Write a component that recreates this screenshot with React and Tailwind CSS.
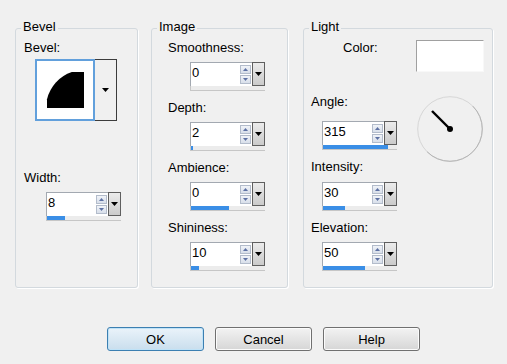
import React from "react";

function SpinBtn({ up }) {
  return (
    <div className="w-[11px] h-[9px] border border-[#b3bccb] bg-gradient-to-b from-[#f0f3f8] to-[#d8dfea] flex items-center justify-center">
      <svg width="5" height="3" viewBox="0 0 5 3">
        {up ? <path d="M0 3 L2.5 0 L5 3 Z" fill="#5d71a3" /> : <path d="M0 0 L5 0 L2.5 3 Z" fill="#5d71a3" />}
      </svg>
    </div>
  );
}

function DownTri() {
  return (
    <svg width="7" height="4" viewBox="0 0 7 4">
      <path d="M0 0 L7 0 L3.5 4 Z" fill="#000" />
    </svg>
  );
}

function Spin({ value, bar, className = "" }) {
  return (
    <div className={`flex flex-col w-[75px] ${className}`}>
      <div className="flex h-[24px]">
        <div className="flex-1 flex bg-white border-t border-l border-[#a3a9b1] pl-[1px]">
          <span className="flex-1 leading-[15px] pt-[2px]">{value}</span>
          <div className="flex flex-col gap-[1px] pt-[2px] pr-[1px]">
            <SpinBtn up />
            <SpinBtn />
          </div>
        </div>
        <div className="w-[13px] flex items-center justify-center border border-[#5f5f5f] bg-gradient-to-b from-[#ececec] to-[#cbcbcb]">
          <DownTri />
        </div>
      </div>
      <div className="h-[5px] bg-[#ececec] border-b border-l border-[#c6c6c6]">
        <div className="h-[4px] bg-[#3a8ee6]" style={{ width: bar }} />
      </div>
    </div>
  );
}

function Group({ title, className = "", children }) {
  return (
    <div className={`relative h-[260px] border border-[#d3d9de] rounded-[3px] shadow-[1px_1px_0_#ffffff] ${className}`}>
      <span className="absolute left-[5px] top-[-10px] bg-[#f0f0f0] px-[2px] leading-[15px]">{title}</span>
      {children}
    </div>
  );
}

function Btn({ children, primary }) {
  return (
    <button
      className={
        "w-[97px] h-[24px] rounded-[3px] border text-[13px] leading-[15px] flex items-center justify-center " +
        (primary
          ? "border-[#3c7fb1] bg-gradient-to-b from-[#eaf3fa] to-[#c9deed] shadow-[inset_0_0_0_1px_#bfe2f7]"
          : "border-[#707070] bg-gradient-to-b from-[#f3f3f3] to-[#d6d6d6] shadow-[inset_0_0_0_1px_#fbfbfb]")
      }
    >
      {children}
    </button>
  );
}

export default function App() {
  return (
    <div className="w-[507px] h-[364px] bg-[#f0f0f0] text-[13px] leading-[15px] text-[#000] font-['Liberation_Sans',Arial,sans-serif] flex flex-col overflow-hidden">
      <div className="flex pt-[28px] pl-[15px]">
        {/* Bevel */}
        <Group title="Bevel" className="w-[123px] flex flex-col pt-[11px] pl-[8px]">
          <span>Bevel:</span>
          <div className="flex ml-[11px] mt-[4px] h-[62px] w-[82px]">
            <div className="w-[60px] h-[62px] bg-white border-2 border-[#62a0dc]">
              <svg width="56" height="58" viewBox="2 2 56 58">
                <path d="M12 49 L12 40.3 A38 38 0 0 1 36.8 13 L49 13 L49 49 Z" fill="#000" />
              </svg>
            </div>
            <div className="flex-1 flex items-center justify-center border border-l-0 border-[#3c3c3c] bg-[#f0f0f0]">
              <DownTri />
            </div>
          </div>
          <span className="mt-[49px]">Width:</span>
          <Spin value="8" bar={18} className="ml-[22px] mt-[7px]" />
        </Group>

        {/* Image */}
        <Group title="Image" className="w-[137px] ml-[13px] flex flex-col pt-[11px] pl-[16px]">
          <span>Smoothness:</span>
          <Spin value="0" bar={0} className="ml-[22px] mt-[7px]" />
          <span className="mt-[9px]">Depth:</span>
          <Spin value="2" bar={2} className="ml-[22px] mt-[7px]" />
          <span className="mt-[9px]">Ambience:</span>
          <Spin value="0" bar={38} className="ml-[22px] mt-[7px]" />
          <span className="mt-[9px]">Shininess:</span>
          <Spin value="10" bar={8} className="ml-[22px] mt-[7px]" />
        </Group>

        {/* Light */}
        <Group title="Light" className="w-[190px] ml-[15px] flex flex-col pt-[11px]">
          <div className="flex justify-between pl-[39px] pr-[8px] h-[32px]">
            <span>Color:</span>
            <div className="w-[68px] h-[32px] bg-white border-t border-l border-[#a0a0a0] border-r border-b border-r-[#f8f8f8] border-b-[#f8f8f8]" />
          </div>
          <div className="flex justify-between pl-[7px] pr-[9px] mt-[22px]">
            <div className="flex flex-col">
              <span>Angle:</span>
              <Spin value="315" bar={65} className="ml-[11px] mt-[12px]" />
              <span className="mt-[9px]">Intensity:</span>
              <Spin value="30" bar={22} className="ml-[11px] mt-[8px]" />
              <span className="mt-[9px]">Elevation:</span>
              <Spin value="50" bar={42} className="ml-[11px] mt-[7px]" />
            </div>
            <svg width="66" height="66" viewBox="0 0 66 66" className="mt-[2px]">
              <circle cx="33" cy="33" r="32.3" fill="none" stroke="#d6d6d6" strokeWidth="1" />
              <path d="M10.16 55.84 A32.3 32.3 0 0 0 55.84 10.16" fill="none" stroke="#b4b4b4" strokeWidth="1" />
              <line x1="15" y1="15" x2="33" y2="33" stroke="#000" strokeWidth="2.4" />
              <circle cx="33" cy="33" r="3" fill="#000" />
            </svg>
          </div>
        </Group>
      </div>

      <div className="flex pl-[107px] gap-[11px] mt-[39px]">
        <Btn primary>OK</Btn>
        <Btn>Cancel</Btn>
        <Btn>Help</Btn>
      </div>
    </div>
  );
}
